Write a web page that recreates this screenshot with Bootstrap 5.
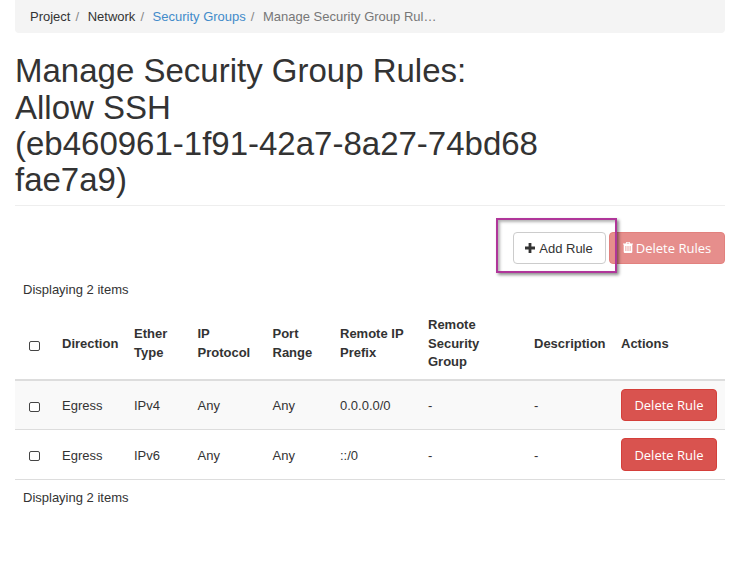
<!DOCTYPE html>
<html lang="en">
<head>
<meta charset="utf-8">
<title>Manage Security Group Rules</title>
<link href="https://cdn.jsdelivr.net/npm/bootstrap@5.3.0/dist/css/bootstrap.min.css" rel="stylesheet">
<style>
body{font-family:"Nimbus Sans","Liberation Sans",Arial,sans-serif;font-size:13px;line-height:18.57px;color:#333;overflow:hidden}
.page-wrap{padding:0 12px 0 15px}
.breadcrumb{--bs-breadcrumb-divider-color:#888;--bs-breadcrumb-item-padding-x:5px;background:#f4f4f4;border-radius:0 0 4px 4px;padding:8px 15px 6px;height:33px;font-size:13px}
.breadcrumb-item+.breadcrumb-item{padding-left:5px}
.breadcrumb-item+.breadcrumb-item::before{padding-right:8.600px}
.breadcrumb a{color:#428bca;text-decoration:none}
.breadcrumb .active{color:#777}
.page-title{color:#333;font-size:33px;line-height:36.3px;font-weight:400;width:532px;height:151.6px;margin:20.4px 0 0}
.title-rule{height:1px;background:#eee}
.toolbar{height:73px;padding-top:26px;gap:3px}
.btn{--bs-btn-font-size:13px;--bs-btn-padding-x:12px;--bs-btn-padding-y:0;--bs-btn-border-radius:4px;height:32px;line-height:30px;white-space:nowrap}
.btn-add{--bs-btn-color:#333;--bs-btn-bg:#fff;--bs-btn-border-color:#ccc;width:93px;padding:2px 1px 0 0}
.btn-del{--bs-btn-color:#fff;--bs-btn-bg:#d9534f;--bs-btn-border-color:#d43f3a;--bs-btn-disabled-color:#fff;--bs-btn-disabled-bg:#d9534f;--bs-btn-disabled-border-color:#d43f3a;font-family:"Open Sans",sans-serif}
.btn-del:disabled{opacity:.65;width:116px;padding:0}
.btn-row{width:96px;padding:0}
.callout-frame{position:absolute;left:-17px;top:-14px;width:121px;height:55px;border:2px solid #b0369a;box-shadow:2px 2px 3px rgba(0,0,0,.45),inset 2px 2px 3px rgba(0,0,0,.3);z-index:2;pointer-events:none}
.count-line{padding:0 8px;height:28px;line-height:22px}
.count-line-end{padding-top:7px}
.rules-table{table-layout:fixed;width:710px;--bs-table-color:#333;--bs-table-striped-color:#333;--bs-table-striped-bg:#f9f9f9;--bs-table-bg:#fff;border-color:#ddd;margin:0;border-collapse:separate;border-spacing:0}
.rules-table th{height:74px;padding:9px 8px 7px;border-bottom:2px solid #ddd;vertical-align:middle}
.rules-table td{height:49px;padding:2px 8px 0;border-bottom:1px solid #ddd;vertical-align:middle}
.rules-table td:first-child,.rules-table td:last-child{padding-top:0}
.rules-table tr:first-child .tick{margin-top:5px}
.rules-table tr:last-child td{height:50px}
.rules-table tbody tr:last-child td:not(:first-child):not(:last-child){padding-top:3px}
.rules-table tr:last-child .btn-row{height:33px;line-height:32px}
.rules-table th,.rules-table td{line-height:18.57px}
.tick{appearance:none;display:block;width:11px;height:10px;border:1px solid #444;border-radius:2px;background:#fff;margin:3px 0 0 6px}
</style>
</head>
<body>
<div class="page-wrap">
<nav aria-label="breadcrumb"><ol class="breadcrumb mb-0">
<li class="breadcrumb-item">Project</li><li class="breadcrumb-item">Network</li><li class="breadcrumb-item"><a href="#">Security Groups</a></li><li class="breadcrumb-item active">Manage Security Group Rul…</li>
</ol></nav>
<h1 class="page-title">Manage Security Group Rules:<br>Allow SSH<br>(eb460961-1f91-42a7-8a27-74bd68<br>fae7a9)</h1>
<div class="title-rule"></div>
<div class="toolbar d-flex justify-content-end">
<div class="position-relative"><button class="btn btn-add d-flex align-items-center justify-content-center"><svg width="10" height="10" viewBox="0 0 10 10" style="margin:0 4px 2px 0"><path fill="none" stroke="#333" stroke-width="2.8" d="M5 0V10M0 5H10"/></svg>Add Rule</button><span class="callout-frame"></span></div>
<button class="btn btn-del d-flex align-items-center justify-content-center" disabled><svg width="10" height="11" viewBox="0 0 10 11" style="margin-right:3px"><path fill="#fff" fill-rule="evenodd" d="M0 1.500H2.600L3.200.3Q3.400 0 3.700 0H6.300Q6.600 0 6.800.3L7.400 1.500H10V2.500H9.300V9.800Q9.300 11 8.200 11H1.800Q.7 11 .7 9.800V2.500H0zM3.700 1.500H6.300L6 .8H4zM2.500 4V9H3.300V4zM4.600 4V9H5.400V4zM6.700 4V9H7.500V4z"/></svg>Delete Rules</button>
</div>
<div class="count-line">Displaying 2 items</div>
<table class="table table-striped rules-table">
<colgroup><col style="width:39px"><col style="width:72px"><col style="width:63.500px"><col style="width:75px"><col style="width:67.500px"><col style="width:88px"><col style="width:106px"><col style="width:87px"><col style="width:112px"></colgroup>
<thead><tr><th><input type="checkbox" class="tick"></th><th>Direction</th><th>Ether Type</th><th>IP Protocol</th><th>Port Range</th><th>Remote IP Prefix</th><th>Remote<br>Security<br>Group</th><th>Description</th><th>Actions</th></tr></thead>
<tbody>
<tr><td><input type="checkbox" class="tick"></td><td>Egress</td><td>IPv4</td><td>Any</td><td>Any</td><td>0.0.0.0/0</td><td>-</td><td>-</td><td><button class="btn btn-del btn-row">Delete Rule</button></td></tr>
<tr><td><input type="checkbox" class="tick"></td><td>Egress</td><td>IPv6</td><td>Any</td><td>Any</td><td>::/0</td><td>-</td><td>-</td><td><button class="btn btn-del btn-row">Delete Rule</button></td></tr>
</tbody>
</table>
<div class="count-line count-line-end">Displaying 2 items</div>
</div>
<script src="https://cdn.jsdelivr.net/npm/bootstrap@5.3.0/dist/js/bootstrap.bundle.min.js"></script>
</body>
</html>
